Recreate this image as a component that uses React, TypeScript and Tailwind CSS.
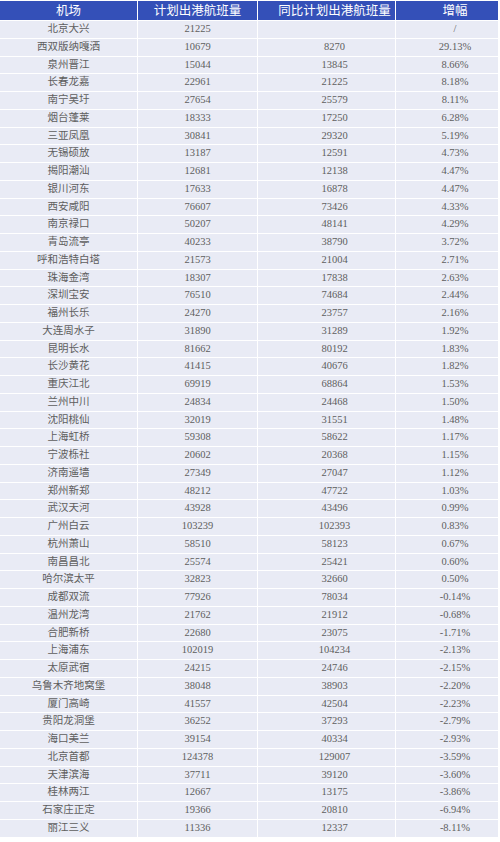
import React from 'react';

type Row = [string, string, string, string];

const rows: Row[] = [
    ['北京大兴', '21225', '', '/'],
    ['西双版纳嘎洒', '10679', '8270', '29.13%'],
    ['泉州晋江', '15044', '13845', '8.66%'],
    ['长春龙嘉', '22961', '21225', '8.18%'],
    ['南宁吴圩', '27654', '25579', '8.11%'],
    ['烟台蓬莱', '18333', '17250', '6.28%'],
    ['三亚凤凰', '30841', '29320', '5.19%'],
    ['无锡硕放', '13187', '12591', '4.73%'],
    ['揭阳潮汕', '12681', '12138', '4.47%'],
    ['银川河东', '17633', '16878', '4.47%'],
    ['西安咸阳', '76607', '73426', '4.33%'],
    ['南京禄口', '50207', '48141', '4.29%'],
    ['青岛流亭', '40233', '38790', '3.72%'],
    ['呼和浩特白塔', '21573', '21004', '2.71%'],
    ['珠海金湾', '18307', '17838', '2.63%'],
    ['深圳宝安', '76510', '74684', '2.44%'],
    ['福州长乐', '24270', '23757', '2.16%'],
    ['大连周水子', '31890', '31289', '1.92%'],
    ['昆明长水', '81662', '80192', '1.83%'],
    ['长沙黄花', '41415', '40676', '1.82%'],
    ['重庆江北', '69919', '68864', '1.53%'],
    ['兰州中川', '24834', '24468', '1.50%'],
    ['沈阳桃仙', '32019', '31551', '1.48%'],
    ['上海虹桥', '59308', '58622', '1.17%'],
    ['宁波栎社', '20602', '20368', '1.15%'],
    ['济南遥墙', '27349', '27047', '1.12%'],
    ['郑州新郑', '48212', '47722', '1.03%'],
    ['武汉天河', '43928', '43496', '0.99%'],
    ['广州白云', '103239', '102393', '0.83%'],
    ['杭州萧山', '58510', '58123', '0.67%'],
    ['南昌昌北', '25574', '25421', '0.60%'],
    ['哈尔滨太平', '32823', '32660', '0.50%'],
    ['成都双流', '77926', '78034', '-0.14%'],
    ['温州龙湾', '21762', '21912', '-0.68%'],
    ['合肥新桥', '22680', '23075', '-1.71%'],
    ['上海浦东', '102019', '104234', '-2.13%'],
    ['太原武宿', '24215', '24746', '-2.15%'],
    ['乌鲁木齐地窝堡', '38048', '38903', '-2.20%'],
    ['厦门高崎', '41557', '42504', '-2.23%'],
    ['贵阳龙洞堡', '36252', '37293', '-2.79%'],
    ['海口美兰', '39154', '40334', '-2.93%'],
    ['北京首都', '124378', '129007', '-3.59%'],
    ['天津滨海', '37711', '39120', '-3.60%'],
    ['桂林两江', '12667', '13175', '-3.86%'],
    ['石家庄正定', '19366', '20810', '-6.94%'],
    ['丽江三义', '11336', '12337', '-8.11%'],
];

const headers = ['机场', '计划出港航班量', '同比计划出港航班量', '增幅'];

export default function App() {
    return (
        <div className="min-h-[842px] bg-white pt-px">
            <div className="grid w-[498px] grid-cols-[137px_119px_137px_102px] grid-rows-[19px_repeat(46,16.76px)] gap-px bg-white font-['Liberation_Serif','Noto_Sans_CJK_SC',serif] text-[10.5px] text-[#5e5e5e]">
                {/* Header */}
                {headers.map((h, i) => (
                    <div
                        key={h}
                        className={`flex items-center justify-center bg-[#3450b8] font-['Noto_Sans_CJK_SC',sans-serif] text-[12.5px] leading-none text-white ${i >= 2 ? 'pl-4' : ''}`}
                    >
                        {h}
                    </div>
                ))}
                {/* Rows */}
                {rows.map((r) =>
                    r.map((cell, i) => (
                        <div
                            key={`${r[0]}-${i}`}
                            className={`flex items-center justify-center bg-[#e9ebf5] leading-none ${i >= 2 ? 'pl-4' : ''}`}
                        >
                            {cell}
                        </div>
                    )),
                )}
            </div>
        </div>
    );
}
